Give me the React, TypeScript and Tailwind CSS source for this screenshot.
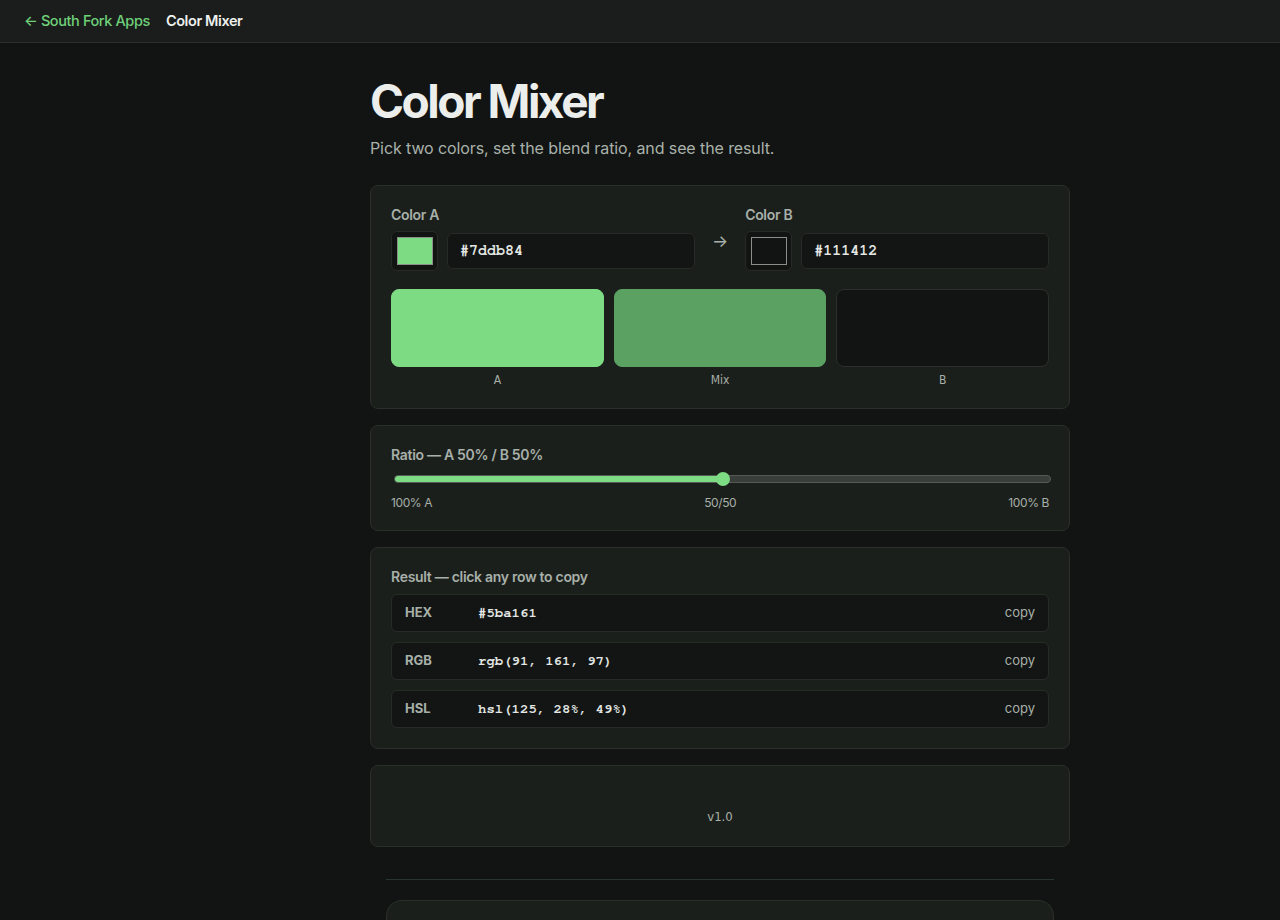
const sans = "font-['Inter','Lato',sans-serif]";
const mono = "font-['Nimbus_Mono_PS','Nimbus_Mono_L','FreeMono','Courier','Liberation_Mono',monospace]";

const ColorField = ({ label, value, swatch }: { label: string; value: string; swatch: string }) => (
  <div className="flex flex-1 flex-col">
    <div className="text-[14px] font-semibold text-[#a7b0a9] tracking-[-0.3px] leading-[18px] mb-[7px]">{label}</div>
    <div className="flex items-center gap-[9px]">
      <div className="w-[47px] h-[40px] rounded-[6px] bg-[#111412] border border-[#262b27] flex items-center justify-center shrink-0">
        <div className={`w-[36px] h-[28px] border border-[#8a8f8b] ${swatch}`} />
      </div>
      <div className={`flex-1 h-[36px] rounded-[6px] bg-[#121513] border border-[#262b27] flex items-center px-[12px] text-[15px] font-bold text-[#e4e7e4] ${mono}`}>
        {value}
      </div>
    </div>
  </div>
);

const ResultRow = ({ k, v }: { k: string; v: string }) => (
  <div className="h-[38px] rounded-[6px] bg-[#121513] border border-[#262b27] flex items-center px-[13px]">
    <span className="w-[73px] text-[13px] font-bold text-[#a7b0a9]">{k}</span>
    <span className={`flex-1 text-[14px] font-bold text-[#e4e7e4] ${mono}`}>{v}</span>
    <span className="text-[13px] text-[#a7b0a9]">copy</span>
  </div>
);

export default function App() {
  return (
    <div className={`min-h-[920px] bg-[#111412] text-[#e8ebe8] ${sans}`}>
      <header className="h-[43px] bg-[#1a1d1b] border-b border-[#2a2f2b] flex items-center px-[24px] gap-[16px]">
        <span className="text-[14.5px] font-medium text-[#6fd07a] tracking-[-0.4px]">← South Fork Apps</span>
        <span className="text-[14.5px] font-semibold text-[#eef0ee] tracking-[-0.4px]">Color Mixer</span>
      </header>

      <div className="pl-[160px]">
        <main className="w-[700px] mx-auto pt-[30px]">
          <h1 className="text-[46px] font-bold tracking-[-2.5px] leading-[56px] text-[#eceeec]">Color Mixer</h1>
          <p className="mt-[7px] text-[16px] text-[#a9b1aa] tracking-[-0.1px] leading-[24px]">Pick two colors, set the blend ratio, and see the result.</p>

          <section className="mt-[25px] rounded-[8px] bg-[#1b1f1c] border border-[#2a2f2b] px-[20px] pt-[20px] pb-[20px]">
            <div className="flex items-end gap-[17px]">
              <ColorField label="Color A" value="#7ddb84" swatch="bg-[#7ddb84]" />
              <div className="h-[40px] flex items-center text-[17px] text-[#a7b0a9] mb-[9px]">→</div>
              <ColorField label="Color B" value="#111412" swatch="bg-[#111412]" />
            </div>
            <div className="mt-[18px] grid grid-cols-3 gap-[10px]">
              {[
                ["A", "bg-[#7ddb84] border-[#7ddb84]"],
                ["Mix", "bg-[#5ba161] border-[#5ba161]"],
                ["B", "bg-[#111412] border-[#2a2f2b]"],
              ].map(([l, c]) => (
                <div key={l} className="flex flex-col items-center">
                  <div className={`w-full h-[78px] rounded-[8px] border ${c}`} />
                  <span className="mt-[5px] text-[12px] text-[#a7b0a9] font-['DejaVu_Sans_Condensed','DejaVu_Sans',sans-serif] leading-[16px]">{l}</span>
                </div>
              ))}
            </div>
          </section>

          <section className="mt-[16px] rounded-[8px] bg-[#1b1f1c] border border-[#2a2f2b] px-[20px] pt-[20px] pb-[19px]">
            <div className="text-[14px] font-semibold text-[#a7b0a9] tracking-[-0.3px] leading-[18px]">Ratio — A 50% / B 50%</div>
            <div className="mt-[8px] relative h-[14px] flex items-center ml-[3px] -mr-[2px]">
              <div className="flex-1 h-[8px] rounded-full bg-[#3a3e3b] border border-[#555a56] overflow-hidden flex">
                <div className="w-1/2 h-full bg-[#7ddb84]" />
              </div>
              <div className="absolute left-1/2 -translate-x-1/2 w-[14px] h-[14px] rounded-full bg-[#7ddb84]" />
            </div>
            <div className="mt-[9px] flex justify-between text-[12px] text-[#a7b0a9] tracking-[-0.4px] leading-[16px]">
              <span>100% A</span>
              <span>50/50</span>
              <span>100% B</span>
            </div>
          </section>

          <section className="mt-[16px] rounded-[8px] bg-[#1b1f1c] border border-[#2a2f2b] px-[20px] pt-[20px] pb-[20px]">
            <div className="text-[14px] font-semibold text-[#a7b0a9] tracking-[-0.3px] leading-[18px] mb-[8px]">Result — click any row to copy</div>
            <div className="flex flex-col gap-[10px]">
              <ResultRow k="HEX" v="#5ba161" />
              <ResultRow k="RGB" v="rgb(91, 161, 97)" />
              <ResultRow k="HSL" v="hsl(125, 28%, 49%)" />
            </div>
          </section>

          <section className="mt-[16px] h-[82px] rounded-[8px] bg-[#1b1f1c] border border-[#2a2f2b] flex items-end justify-center pb-[20px]">
            <span className="text-[13px] text-[#a7b0a9] font-['DejaVu_Sans_Condensed','DejaVu_Sans',sans-serif]">v1.0</span>
          </section>

          <div className="mx-[16px] mt-[32px] border-t border-[#263530]" />
          <div className="mx-[16px] mt-[20px] h-[40px] rounded-t-[16px] bg-[#1b1f1c] border border-b-0 border-[#2a2f2b]" />
        </main>
      </div>
    </div>
  );
}
